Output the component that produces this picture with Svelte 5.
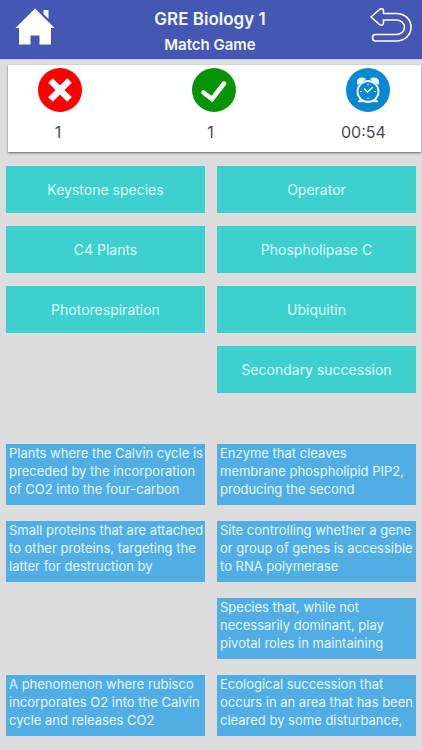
<script>
    let wrong = $state(1)
    let right = $state(1)
    let time = $state("00:54")

    // null leaves an empty slot where a pair has already been matched
    const terms = [
        "Keystone species", "Operator",
        "C4 Plants", "Phospholipase C",
        "Photorespiration", "Ubiquitin",
        null, "Secondary succession"
    ]

    const definitions = [
        "Plants where the Calvin cycle is\npreceded by the incorporation\nof CO2 into the four-carbon",
        "Enzyme that cleaves\nmembrane phospholipid PIP2,\nproducing the second",
        "Small proteins that are attached\nto other proteins, targeting the\nlatter for destruction by",
        "Site controlling whether a gene\nor group of genes is accessible\nto RNA polymerase",
        null,
        "Species that, while not\nnecessarily dominant, play\npivotal roles in maintaining",
        "A phenomenon where rubisco\nincorporates O2 into the Calvin\ncycle and releases CO2",
        "Ecological succession that\noccurs in an area that has been\ncleared by some disturbance,"
    ]

    let selected = $state(null)
</script>

<div class="page">
    <header>
        <button class="nav" aria-label="Home">
            <svg width="40" height="38" viewBox="0 0 40 38" fill="#fff">
                <path d="M20 0.500 L0.500 20 H4 V36.500 H15.500 V27.500 H24.500 V36.500 H36 V20 H39.500 Z" />
                <path d="M28.500 2 H33.500 V11 L28.500 6 Z" />
            </svg>
        </button>
        <div class="titles">
            <h1>GRE Biology 1</h1>
            <h2>Match Game</h2>
        </div>
        <button class="nav back" aria-label="Back">
            <svg width="44" height="36" viewBox="0 0 44 36" fill="none" stroke="#fff" stroke-width="1.600" stroke-linejoin="round">
                <path d="M2 9 L10.500 1.500 Q13.800 -0.500 14.500 2.500 V5.500 H27 C36 5.500 42 11.500 42 19 C42 27 36 33 27 33 H6.500 C2.500 33 2.500 26.500 6.500 26.500 H27 C32 26.500 35.500 23.500 35.500 19.300 C35.500 15 32 12 27 12 H14.500 V15 Q14 18.500 10.500 16.500 Z" />
            </svg>
        </button>
    </header>

    <section class="score" aria-label="Score">
        <div class="icons">
            <svg width="44" height="44" viewBox="0 0 44 44">
                <circle cx="22" cy="22" r="22" fill="#fe0000" />
                <path d="M12.500 12.500 L31.500 31.500 M31.500 12.500 L12.500 31.500" stroke="#fff" stroke-width="6.500" />
            </svg>
            <svg width="44" height="44" viewBox="0 0 44 44">
                <circle cx="22" cy="22" r="22" fill="#059405" />
                <path d="M11.500 24.500 L20 31 L32 15.500" fill="none" stroke="#fff" stroke-width="4.500" stroke-linecap="round" />
            </svg>
            <svg width="44" height="44" viewBox="0 0 44 44" fill="none" stroke="#fff" stroke-linecap="round">
                <circle cx="22" cy="22" r="22" fill="#0788d1" stroke="none" />
                <path d="M11.500 17 C9 11 15 7.500 20 11 Z M32.500 17 C35 11 29 7.500 24 11 Z" fill="#fff" stroke="none" />
                <circle cx="22" cy="23.500" r="10.500" fill="#0788d1" stroke-width="1.800" />
                <path d="M18.500 21 L21.500 24 L26.500 19.500" stroke-width="1.500" />
                <path d="M22 16 V17 M22 30 V31 M14.500 23.500 H15.500 M28.500 23.500 H29.500" stroke-width="1" />
                <path d="M14.500 31.500 L13 33.500 H16 M29.500 31.500 L31 33.500 H28" stroke-width="1.500" />
            </svg>
        </div>
        <div class="values">
            <span>{wrong}</span>
            <span>{right}</span>
            <span>{time}</span>
        </div>
    </section>

    <main>
        <div class="grid terms">
            {#each terms as term}
                {#if term}
                    <button class="term" onclick={() => selected = term}>{term}</button>
                {:else}
                    <div></div>
                {/if}
            {/each}
        </div>
        <div class="grid definitions">
            {#each definitions as definition}
                {#if definition}
                    <button class="definition" onclick={() => selected = null}>{definition}</button>
                {:else}
                    <div></div>
                {/if}
            {/each}
        </div>
    </main>
</div>

<style>
    :global(body) {
        margin: 0;
        background: #dddddd;
    }
    .page {
        font-family: Inter, "Liberation Sans", sans-serif;
        background: #dddddd;
    }
    button {
        font: inherit;
        border: none;
        border-radius: 0;
        padding: 0;
        cursor: pointer;
    }
    svg {
        display: block;
    }
    header {
        display: flex;
        justify-content: space-between;
        align-items: flex-start;
        padding: 8px 9px 0 15px;
        height: 51px;
        background: #4457b2;
        border-bottom: 1px solid #c3c7e2;
        color: #f4f6ff;
    }
    .nav {
        background: none;
    }
    .back {
        padding-left: 4px;
    }
    .titles {
        text-align: center;
    }
    h1, h2 {
        margin: 0;
        font-weight: 600;
    }
    h1 {
        font-size: 17px;
        line-height: 23px;
    }
    h2 {
        font-size: 15px;
        line-height: 28px;
    }
    .score {
        margin: 5px 1px 0 8px;
        padding: 3px 0 8px;
        background: #fff;
        box-shadow: 0 1px 2px #666;
    }
    .icons, .values {
        display: flex;
        justify-content: space-between;
    }
    .icons {
        padding: 0 31px 0 30px;
    }
    .values {
        padding: 8px 36px 0 28px;
        color: #4a4a4a;
        font-size: 16px;
        line-height: 24px;
    }
    .values span {
        width: 44px;
        text-align: center;
    }
    main {
        display: flex;
        flex-direction: column;
        gap: 51px;
        padding: 14px 6px;
    }
    .grid {
        display: grid;
        grid-template-columns: repeat(2, minmax(0, 1fr));
        column-gap: 12px;
    }
    .terms {
        grid-auto-rows: 47px;
        row-gap: 13px;
    }
    .definitions {
        grid-auto-rows: 61px;
        row-gap: 16px;
    }
    .term {
        background: #3ecfcf;
        color: #dcfbfb;
        font-size: 14px;
    }
    .definition {
        display: flex;
        align-items: flex-start;
        padding: 0 3px;
        background: #50aee5;
        color: #e4f6ff;
        font-size: 13px;
        line-height: 18px;
        text-align: left;
        white-space: pre;
    }
</style>
